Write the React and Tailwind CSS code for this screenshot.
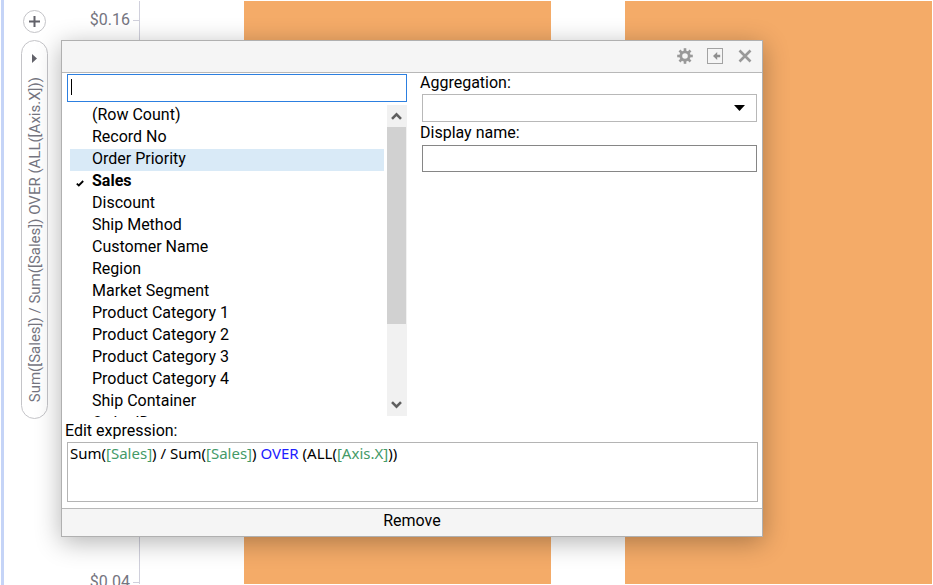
import { useState } from "react";

const COLUMNS = [
  "(Row Count)",
  "Record No",
  "Order Priority",
  "Sales",
  "Discount",
  "Ship Method",
  "Customer Name",
  "Region",
  "Market Segment",
  "Product Category 1",
  "Product Category 2",
  "Product Category 3",
  "Product Category 4",
  "Ship Container",
  "Order ID",
];

const EXPRESSION = "Sum([Sales]) / Sum([Sales]) OVER (ALL([Axis.X]))";

function Gear() {
  const teeth = [0, 45, 90, 135, 180, 225, 270, 315];
  return (
    <svg width="16" height="16" viewBox="0 0 16 16" aria-hidden="true">
      <circle cx="8" cy="8" r="4.2" fill="none" stroke="#999" strokeWidth="2.8" />
      {teeth.map((a) => (
        <rect key={a} x="6.7" y="0.2" width="2.6" height="3" fill="#999" transform={`rotate(${a} 8 8)`} />
      ))}
    </svg>
  );
}

function Dock() {
  return (
    <svg width="16" height="16" viewBox="0 0 16 16" aria-hidden="true">
      <rect x="0.5" y="0.5" width="15" height="15" fill="none" stroke="#a3a3a3" />
      <path d="M6 8 10.2 4v2.7h3v2.6h-3V12z" fill="#8f8f8f" />
    </svg>
  );
}

function Close() {
  return (
    <svg width="14" height="14" viewBox="0 0 14 14" aria-hidden="true">
      <path d="M1.5 1.5 12.5 12.5M12.5 1.5 1.5 12.5" stroke="#999" strokeWidth="2.6" fill="none" />
    </svg>
  );
}

function Chevron({ down }) {
  return (
    <svg width="11" height="8" viewBox="0 0 11 8" aria-hidden="true">
      <path d={down ? "M1 1.2 5.5 5.7 10 1.2" : "M1 6.8 5.5 2.3 10 6.8"} stroke="#5f5f5f" strokeWidth="2.6" fill="none" />
    </svg>
  );
}

function AxisSelector() {
  return (
    <div className="flex w-[57px] shrink-0 flex-col items-center pl-[4px] pt-[9px]">
      <button aria-label="Add expression" className="flex size-[23px] shrink-0 items-center justify-center rounded-full border border-[#c4c4c8] bg-white">
        <svg width="11" height="11" viewBox="0 0 11 11" aria-hidden="true">
          <path d="M5.5 0v11M0 5.5h11" stroke="#62626a" strokeWidth="2" />
        </svg>
      </button>
      <button className="mt-[7px] flex h-[379px] w-[27px] shrink-0 flex-col items-center rounded-full border border-[#c4c4c8] bg-white pt-[13px]">
        <svg width="5" height="9" viewBox="0 0 5 9" className="shrink-0" aria-hidden="true">
          <path d="M0 0 5 4.5 0 9z" fill="#62626a" />
        </svg>
        <span className="mt-[14px] rotate-180 whitespace-nowrap text-[15px] leading-[20px] text-[#75757f] [writing-mode:vertical-rl]">
          {EXPRESSION}
        </span>
      </button>
    </div>
  );
}

function Scale() {
  return (
    <div className="-mb-[8px] flex w-[78px] shrink-0 flex-col justify-between pt-[9px] text-[16px] leading-[20px] text-[#75757f]">
      {["$0.16", "$0.04"].map((label) => (
        <div key={label} className="flex items-center justify-end gap-[3px]">
          {label}
          <span className="h-px w-[6px] bg-[#d0d0dc]" />
        </div>
      ))}
    </div>
  );
}

function ColumnList({ selected, onSelect }) {
  return (
    <div className="mt-[3px] flex h-[312px] justify-between pl-[3px]">
      <ul className="w-[314px] overflow-hidden">
        {COLUMNS.map((name) => (
          <li key={name}>
            <button
              onClick={() => onSelect(name)}
              className={`flex h-[22px] w-full items-start text-left leading-[19px] ${name === "Order Priority" ? "bg-[#d9eaf7]" : ""} ${name === selected ? "font-bold" : ""}`}
            >
              <span className="flex h-[22px] w-[22px] shrink-0 items-center pl-[6px] pt-[3px]">
                {name === selected && (
                  <svg width="8" height="7" viewBox="0 0 8 7" aria-hidden="true">
                    <path d="M0.8 3.6 2.8 5.4 7.2 1" stroke="#000" strokeWidth="1.8" fill="none" />
                  </svg>
                )}
              </span>
              {name}
            </button>
          </li>
        ))}
      </ul>
      <div className="flex h-[311px] w-[20px] flex-col bg-[#f1f1f1]">
        <button aria-label="Scroll up" className="flex h-[22px] items-center justify-center pr-px">
          <Chevron />
        </button>
        <div className="mr-px h-[197px] bg-[#d1d1d1]" />
        <button aria-label="Scroll down" className="mt-auto flex h-[22px] items-center justify-center pr-px">
          <Chevron down />
        </button>
      </div>
    </div>
  );
}

function ExpressionEditor() {
  const [text, setText] = useState(EXPRESSION);
  const parts = text.split(/(\[[^\]]*\]|OVER)/);
  return (
    <div className="ml-[5px] mr-[4px] grid h-[60px] border border-[#b4b4b4] bg-white font-['Noto_Sans','Open_Sans',sans-serif] text-[15px] leading-[20px]">
      <pre aria-hidden="true" className="overflow-hidden whitespace-pre-wrap px-[2px] text-black [font-family:inherit] [grid-area:1/1]">
        {parts.map((part, i) => (
          <span key={i} className={part === "OVER" ? "text-[#2020ff]" : part.startsWith("[") ? "text-[#449a68]" : ""}>
            {part}
          </span>
        ))}
      </pre>
      <textarea
        id="expression"
        spellCheck="false"
        value={text}
        onChange={(e) => setText(e.target.value)}
        className="resize-none bg-transparent px-[2px] text-transparent caret-black outline-none [grid-area:1/1]"
      />
    </div>
  );
}

function ExpressionDialog() {
  const [selected, setSelected] = useState("Sales");
  return (
    <section
      role="dialog"
      aria-label="Edit axis expression"
      className="absolute left-[61px] top-[40px] w-[702px] border border-[#b0b0b0] bg-white text-[16px] leading-[20px] text-black shadow-[0_5px_24px_rgba(0,0,0,0.3)]"
    >
      <header className="flex h-[32px] items-center justify-end gap-[14px] border-b border-[#b8b8b8] bg-[#f5f5f5] pb-px pr-[10px]">
        <button aria-label="Settings"><Gear /></button>
        <button aria-label="Dock"><Dock /></button>
        <button aria-label="Close" className="pl-px"><Close /></button>
      </header>
      <div className="flex gap-[15px] pl-[5px] pr-[5px] pt-px">
        <div className="w-[340px] shrink-0">
          <div className="relative">
            <input aria-label="Search columns" className="block h-[28px] w-full border border-[#2c7fe0] px-1 caret-transparent outline-none" />
            <span className="absolute left-[4px] top-[5px] h-[16px] w-px bg-black" />
          </div>
          <ColumnList selected={selected} onSelect={setSelected} />
        </div>
        <div className="flex min-w-0 flex-1 flex-col">
          <label htmlFor="aggregation" className="-ml-[2px] h-[20px] leading-[18px]">Aggregation:</label>
          <div className="relative">
            <select id="aggregation" className="block h-[28px] w-full appearance-none border border-[#b8b8b8] bg-white px-1 outline-none">
              <option value=""></option>
            </select>
            <svg width="11" height="6" viewBox="0 0 11 6" className="pointer-events-none absolute right-[12px] top-[11px]" aria-hidden="true">
              <path d="M0 0h11L5.5 6z" fill="#000" />
            </svg>
          </div>
          <label htmlFor="display-name" className="-ml-[2px] h-[23px] leading-[22px]">Display name:</label>
          <input id="display-name" className="block h-[27px] w-full border border-[#868686] bg-white px-1 outline-none" />
        </div>
      </div>
      <label htmlFor="expression" className="block h-[25px] pl-[3px] pt-[4px]">Edit expression:</label>
      <ExpressionEditor />
      <footer className="mt-[6px] border-t border-[#b8b8b8] bg-[#f5f5f5]">
        <button className="block h-[27px] w-full pb-[4px] leading-[22px]">Remove</button>
      </footer>
    </section>
  );
}

export default function App() {
  return (
    <main className="relative h-screen overflow-hidden bg-white pl-px font-[Roboto,sans-serif]">
      <div className="flex h-full border-l-3 border-[#c5d4f7] py-px">
        <AxisSelector />
        <Scale />
        <div className="flex flex-1 gap-[74px] border-l border-[#d0d0dc] pl-[104px] pr-px">
          <div className="flex-1 bg-[#f4ab68]" />
          <div className="flex-1 bg-[#f4ab68]" />
        </div>
      </div>
      <ExpressionDialog />
    </main>
  );
}
